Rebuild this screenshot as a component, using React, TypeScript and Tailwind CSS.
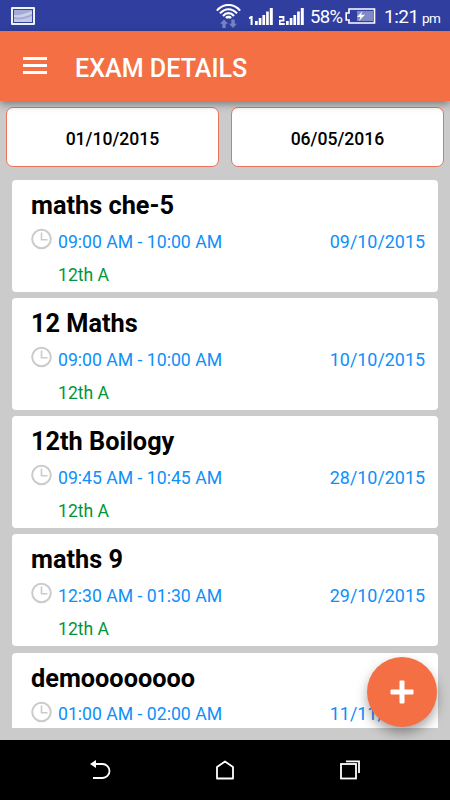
const exams = [
  { title: "maths che-5", time: "09:00 AM - 10:00 AM", date: "09/10/2015", batch: "12th A" },
  { title: "12 Maths", time: "09:00 AM - 10:00 AM", date: "10/10/2015", batch: "12th A" },
  { title: "12th Boilogy", time: "09:45 AM - 10:45 AM", date: "28/10/2015", batch: "12th A" },
  { title: "maths 9", time: "12:30 AM - 01:30 AM", date: "29/10/2015", batch: "12th A" },
  { title: "demoooooooo", time: "01:00 AM - 02:00 AM", date: "11/11/2015", batch: "" },
];

function PictureIcon() {
  return (
    <svg width="24" height="18" viewBox="0 0 24 18">
      <rect width="24" height="18" rx="1" fill="#f0f2fa" />
      <rect x="2" y="2" width="20" height="14" fill="#34429f" />
      <rect x="3" y="3" width="18" height="12" fill="#a3abd6" />
      <path d="M3 8c5 1 9-1 18-4v3c-7 3-12 4-18 3z" fill="#cbd0e9" />
      <path d="M3 12c6 1 12 0 18-3v6H3z" fill="#c3c9e5" />
    </svg>
  );
}

function WifiIcon() {
  return (
    <svg width="25" height="24" viewBox="0 0 25 24" fill="none" stroke="#fff">
      <path d="M.9 6.6C7.5-1 17.5-1 24.1 6.6M4 9.4c5-5.6 12-5.6 17 0M7 12c3.2-3.8 7.8-3.8 11 0" strokeWidth="2.1" />
      <path d="M9.2 13.3c1.8-1.9 4.8-1.9 6.6 0l-1.5 1.5c-1-.9-2.6-.9-3.6 0z" fill="#fff" stroke="none" />
      <path d="M8 15.5l4 4.3H9.7V24H6.3v-4.2H4zM17 24l-4-4.3h2.3v-4.2h3.4v4.2H21z" fill="#7882c0" stroke="none" />
    </svg>
  );
}

function SignalIcon({ sim }: { sim: 1 | 2 }) {
  return (
    <svg width="26" height="19" viewBox="0 0 26 19" fill="#fff">
      {sim === 1 ? (
        <path d="M1 10.2L3 9h1.6v9H2.6v-6.4L1 12.3z" />
      ) : (
        <path d="M-.3 10h4.8v3.6H.7V17h5" fill="none" stroke="#fff" strokeWidth="1.8" />
      )}
      <path d="M7 14h2.7v4H7zM10.7 11h2.7v7h-2.7zM14.4 8h2.7v10h-2.7zM18.1 4.5h2.7V18h-2.7zM21.8 1h3v17h-3z" />
    </svg>
  );
}

function BatteryIcon() {
  return (
    <svg width="31" height="16" viewBox="0 0 31 16">
      <path d="M4 1h25.5v14H4v-3H1.2V5H4z" fill="none" stroke="#fff" strokeWidth="1.6" />
      <path d="M12 3h16v10H12z" fill="#7f89c5" />
      <path d="M17.5 3L12 9h3.5L14 13l6-6.2h-4z" fill="#fff" />
    </svg>
  );
}

function StatusBar() {
  return (
    <div className="flex h-[31px] items-center bg-[#303f9f] pr-[10px] pl-[11px] text-white">
      <PictureIcon />
      <div className="ml-auto flex h-full items-center">
        <WifiIcon />
        <div className="ml-[7px] pt-0.5"><SignalIcon sim={1} /></div>
        <div className="ml-[5px] pt-0.5"><SignalIcon sim={2} /></div>
        <span className="ml-[5px] w-[33px] pt-0.5 text-[18.5px] leading-6 tracking-[-0.7px]">58%</span>
        <div className="ml-[2px]"><BatteryIcon /></div>
        <span className="ml-[8px] w-[34px] pt-[3px] text-[19px] leading-6 tracking-[-0.5px]">1:21</span>
        <span className="ml-[4px] w-[18px] pt-[5px] text-[13.5px] leading-6 tracking-[-0.5px]">pm</span>
      </div>
    </div>
  );
}

function ClockIcon() {
  return (
    <svg width="22" height="22" viewBox="0 0 22 22" fill="none" stroke="#cbcbcb" strokeWidth="2">
      <circle cx="10.5" cy="11" r="9.3" />
      <path d="M10.5 4.5v7.2h6" strokeWidth="1.6" />
    </svg>
  );
}

function DateButton({ children }: { children: string }) {
  return (
    <button className="h-[60px] flex-1 rounded-[7px] border border-[#e8745a] bg-white pt-1 text-[17.6px] font-medium text-black">
      {children}
    </button>
  );
}

function ExamCard({ title, time, date, batch }: (typeof exams)[number]) {
  return (
    <div className="h-[112px] shrink-0 rounded bg-white pt-[9px] pr-[13px] pl-[19px]">
      <h2 className="text-[25.3px] leading-[33px] font-bold text-black">{title}</h2>
      <div className="flex h-[34px] items-center text-[17.9px] text-[#0f90f8]">
        <ClockIcon />
        <span className="ml-[5px] pt-[6px] text-[17.65px]">{time}</span>
        <span className="ml-auto pt-[6px]">{date}</span>
      </div>
      {batch && <p className="pl-[27px] text-[17.6px] leading-[39px] text-[#009640]">{batch}</p>}
    </div>
  );
}

function NavBar() {
  return (
    <div className="flex h-[60px] items-center bg-black">
      <button className="flex w-[200px] justify-center">
        <svg width="22" height="22" viewBox="0 0 22 22" fill="none" stroke="#fff" strokeWidth="1.8">
          <path d="M5 5h8.5a7 7 0 0 1 0 14H4" />
          <path d="M1 5l6-4v8z" fill="#fff" stroke="none" />
        </svg>
      </button>
      <button className="flex w-[50px] justify-center">
        <svg width="20" height="22" viewBox="0 0 20 22" fill="none" stroke="#fff" strokeWidth="1.8">
          <path d="M2 19.5V8l8-5.5L18 8v11.5z" strokeLinejoin="round" />
        </svg>
      </button>
      <button className="flex w-[200px] justify-center">
        <svg width="22" height="22" viewBox="0 0 22 22" fill="none" stroke="#fff" strokeWidth="1.8">
          <rect x="2" y="5" width="15" height="14.5" />
          <path d="M7 2.3h13V14" />
        </svg>
      </button>
    </div>
  );
}

export default function App() {
  return (
    <div className="relative flex h-[800px] w-[450px] flex-col overflow-hidden bg-[#cbcbcb] font-['Roboto',sans-serif]">
      <StatusBar />
      <header className="z-10 flex h-[70px] items-center bg-[#f46f43] pl-[23px] text-white shadow-[0_3px_8px_rgba(0,0,0,0.4)]">
        <button className="-mt-px flex w-6 flex-col gap-1">
          <span className="h-[3px] bg-white" />
          <span className="h-[3px] bg-white" />
          <span className="h-[3px] bg-white" />
        </button>
        <h1 className="ml-7 pt-[5px] text-[25.1px] font-medium">EXAM DETAILS</h1>
      </header>
      <div className="flex gap-3 px-1.5 pt-1.5">
        <DateButton>01/10/2015</DateButton>
        <DateButton>06/05/2016</DateButton>
      </div>
      <main className="mx-3 mt-[13px] mb-[12.5px] flex flex-1 flex-col gap-[6.15px] overflow-hidden">
        {exams.map((exam) => (
          <ExamCard key={exam.title} {...exam} />
        ))}
      </main>
      <button className="absolute top-[657px] left-[367px] flex size-[70px] items-center justify-center rounded-full bg-[#f46f43] shadow-[0_6px_12px_rgba(0,0,0,0.35)]">
        <svg width="24" height="24" viewBox="0 0 24 24" fill="#fff">
          <rect x="9.5" y=".5" width="5" height="23" rx="1" />
          <rect x=".5" y="9.5" width="23" height="5" rx="1" />
        </svg>
      </button>
      <NavBar />
    </div>
  );
}
